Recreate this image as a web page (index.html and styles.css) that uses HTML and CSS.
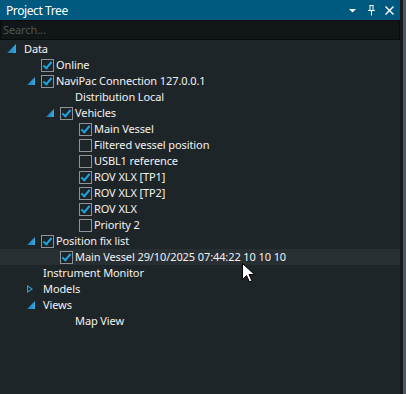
FILE: index.html
```html
<!DOCTYPE html>
<html lang="en">
<head>
  <meta charset="UTF-8" />
  <title>Project Tree</title>
  <link rel="stylesheet" href="styles.css">
</head>
<body>

<div class="window">
  <div class="panel">
    <div class="titlebar">
      <span class="title">Project Tree</span>
      <div class="title-icons">
        <svg class="ic-drop" width="7" height="4" viewBox="0 0 7 4"><polygon points="0,0 7,0 3.5,3.5" fill="#fff"/></svg>
        <svg class="ic-pin" width="7" height="11" viewBox="0 0 7 11"><path d="M1.5 0.5h4M2 0.5v5M5 0.5v5M0 5.5h7M3.5 5.5v5" stroke="#fff" stroke-width="1" fill="none"/></svg>
        <svg class="ic-close" width="9" height="9" viewBox="0 0 9 9"><path d="M0.5 0.5l8 8M8.5 0.5l-8 8" stroke="#fff" stroke-width="1.4"/></svg>
      </div>
    </div>

    <div class="search">Search...</div>

    <div class="tree">
      <div class="row lv0"><span class="exp open"></span><span class="label">Data</span></div>
      <div class="row lv1"><span class="exp"></span><span class="cb on"></span><span class="label">Online</span></div>
      <div class="row lv1"><span class="exp open"></span><span class="cb on"></span><span class="label">NaviPac Connection 127.0.0.1</span></div>
      <div class="row lv2"><span class="exp"></span><span class="cb hidden"></span><span class="label">Distribution Local</span></div>
      <div class="row lv2"><span class="exp open"></span><span class="cb on"></span><span class="label">Vehicles</span></div>
      <div class="row lv3"><span class="exp"></span><span class="cb on"></span><span class="label">Main Vessel</span></div>
      <div class="row lv3"><span class="exp"></span><span class="cb"></span><span class="label">Filtered vessel position</span></div>
      <div class="row lv3"><span class="exp"></span><span class="cb"></span><span class="label">USBL1 reference</span></div>
      <div class="row lv3"><span class="exp"></span><span class="cb on"></span><span class="label">ROV XLX [TP1]</span></div>
      <div class="row lv3"><span class="exp"></span><span class="cb on"></span><span class="label">ROV XLX [TP2]</span></div>
      <div class="row lv3"><span class="exp"></span><span class="cb on"></span><span class="label">ROV XLX</span></div>
      <div class="row lv3"><span class="exp"></span><span class="cb"></span><span class="label">Priority 2</span></div>
      <div class="row lv1"><span class="exp open"></span><span class="cb on"></span><span class="label">Position fix list</span></div>
      <div class="row lv2 hover"><span class="exp"></span><span class="cb on"></span><span class="label">Main Vessel 29/10/2025 07:44:22 10 10 10</span></div>
      <div class="row lv1"><span class="exp"></span><span class="label">Instrument Monitor</span></div>
      <div class="row lv1"><span class="exp closed"></span><span class="label">Models</span></div>
      <div class="row lv1"><span class="exp open"></span><span class="label">Views</span></div>
      <div class="row lv2"><span class="exp"></span><span class="cb hidden"></span><span class="label">Map View</span></div>
    </div>

    <svg class="cursor" width="13" height="20" viewBox="0 0 13 20">
      <path d="M0.5 0.5v16l4-4 3 6.5 2.5-1.2-3-6.3h5.5z" fill="#fff" stroke="#000" stroke-width="1"/>
    </svg>
  </div>
  <div class="edge-dark"></div>
  <div class="edge-light"></div>
</div>

</body>
</html>
```

FILE: styles.css
```css
body {
  margin: 0;
  background-color: #1e2528;
  font-family: 'Noto Sans', 'Liberation Sans', sans-serif;
  font-size: 11px;
  letter-spacing: -0.1px;
  color: #f2f2f2;
}
.window {
  display: flex;
  width: 406px;
  height: 394px;
}
.panel {
  position: relative;
  width: 400px;
  display: flex;
  flex-direction: column;
}
.edge-dark {
  width: 3px;
  background-color: #151a1c;
}
.edge-light {
  width: 3px;
  background-color: #4c5865;
}
.titlebar {
  height: 20px;
  background-color: #005a80;
  display: flex;
  align-items: center;
  justify-content: space-between;
  padding: 0 6px;
}
.title {
  color: #fff;
  font-size: 12px;
  letter-spacing: -0.4px;
}
.title-icons {
  display: flex;
  align-items: center;
}
.title-icons svg { display: block; }
.ic-drop { margin-top: 2px; }
.ic-pin { margin-left: 12px; }
.ic-close { margin-left: 10px; }
.search {
  height: 18px;
  line-height: 18px;
  background-color: #111618;
  border: 1px solid #090c0d;
  padding-left: 2px;
  color: #4f5659;
}
.tree {
  padding-top: 1px;
}
.row {
  height: 16px;
  display: flex;
  align-items: center;
  white-space: nowrap;
}
.row.hover {
  background-color: #272f32;
}
.lv0 { padding-left: 5px; }
.lv1 { padding-left: 24px; }
.lv2 { padding-left: 43px; }
.lv3 { padding-left: 62px; }
.exp {
  width: 19px;
  height: 16px;
  flex-shrink: 0;
  position: relative;
}
.exp.open::after {
  content: "";
  position: absolute;
  left: 3px;
  top: 4px;
  width: 8px;
  height: 8px;
  background: linear-gradient(to right, #1a78ad, #35a9df);
  clip-path: polygon(100% 0, 100% 100%, 0 100%);
}
.lv0 .exp.open::after {
  left: 2px;
  width: 9px;
  height: 9px;
  top: 3px;
}
.exp.closed::after {
  content: "";
  position: absolute;
  left: 3px;
  top: 4px;
  width: 0;
  height: 0;
  border-top: 4px solid transparent;
  border-bottom: 4px solid transparent;
  border-left: 6px solid #2a9fd8;
}
.exp.closed::before {
  content: "";
  position: absolute;
  left: 4px;
  top: 6px;
  width: 0;
  height: 0;
  border-top: 2px solid transparent;
  border-bottom: 2px solid transparent;
  border-left: 3px solid #1e2528;
  z-index: 1;
}
.cb {
  width: 11px;
  height: 11px;
  margin-left: -2px;
  margin-right: 2px;
  border: 1px solid #8d9398;
  background-color: #1e2528;
  flex-shrink: 0;
  position: relative;
}
.cb.hidden { visibility: hidden; }
.cb.on::after {
  content: "";
  position: absolute;
  left: 3px;
  top: 0px;
  width: 3px;
  height: 7px;
  border-right: 2px solid #1ea4e2;
  border-bottom: 2px solid #1ea4e2;
  transform: rotate(40deg);
}
.label {
  line-height: 16px;
}
.cursor {
  position: absolute;
  left: 242px;
  top: 263px;
}
```
